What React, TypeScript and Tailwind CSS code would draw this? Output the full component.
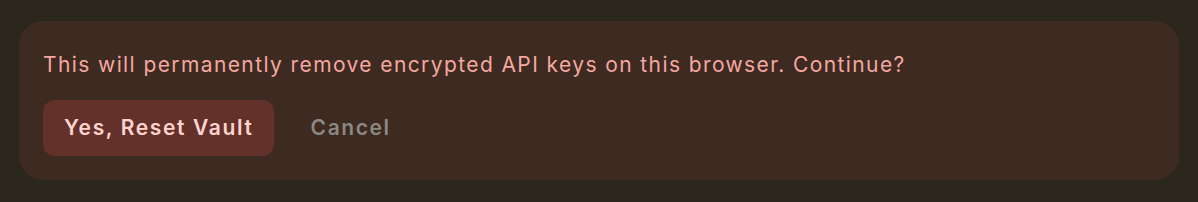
export default function App() {
  return (
    <div
      className="min-h-screen bg-[#2b271c] px-[19px] pt-[21px]"
      style={{ fontFamily: "Inter, 'Noto Sans', sans-serif" }}
    >
      <div className="rounded-3xl bg-[#3d2a20] px-6 pt-[30px] pb-6">
        <p className="text-[21px] leading-7 tracking-[1.4px] text-[#f6a7a1]">
          This will permanently remove encrypted API keys on this browser. Continue?
        </p>
        <div className="mt-[21px] flex items-center gap-4">
          <button className="h-14 rounded-xl bg-[#63312a] pl-[21px] pr-[20px] text-[21px] font-semibold tracking-[1.65px] text-[#ffd3cf]">
            Yes, Reset Vault
          </button>
          <button className="h-14 px-[21px] text-[21px] font-semibold tracking-[1.6px] text-[#8c8883]">
            Cancel
          </button>
        </div>
      </div>
    </div>
  );
}
